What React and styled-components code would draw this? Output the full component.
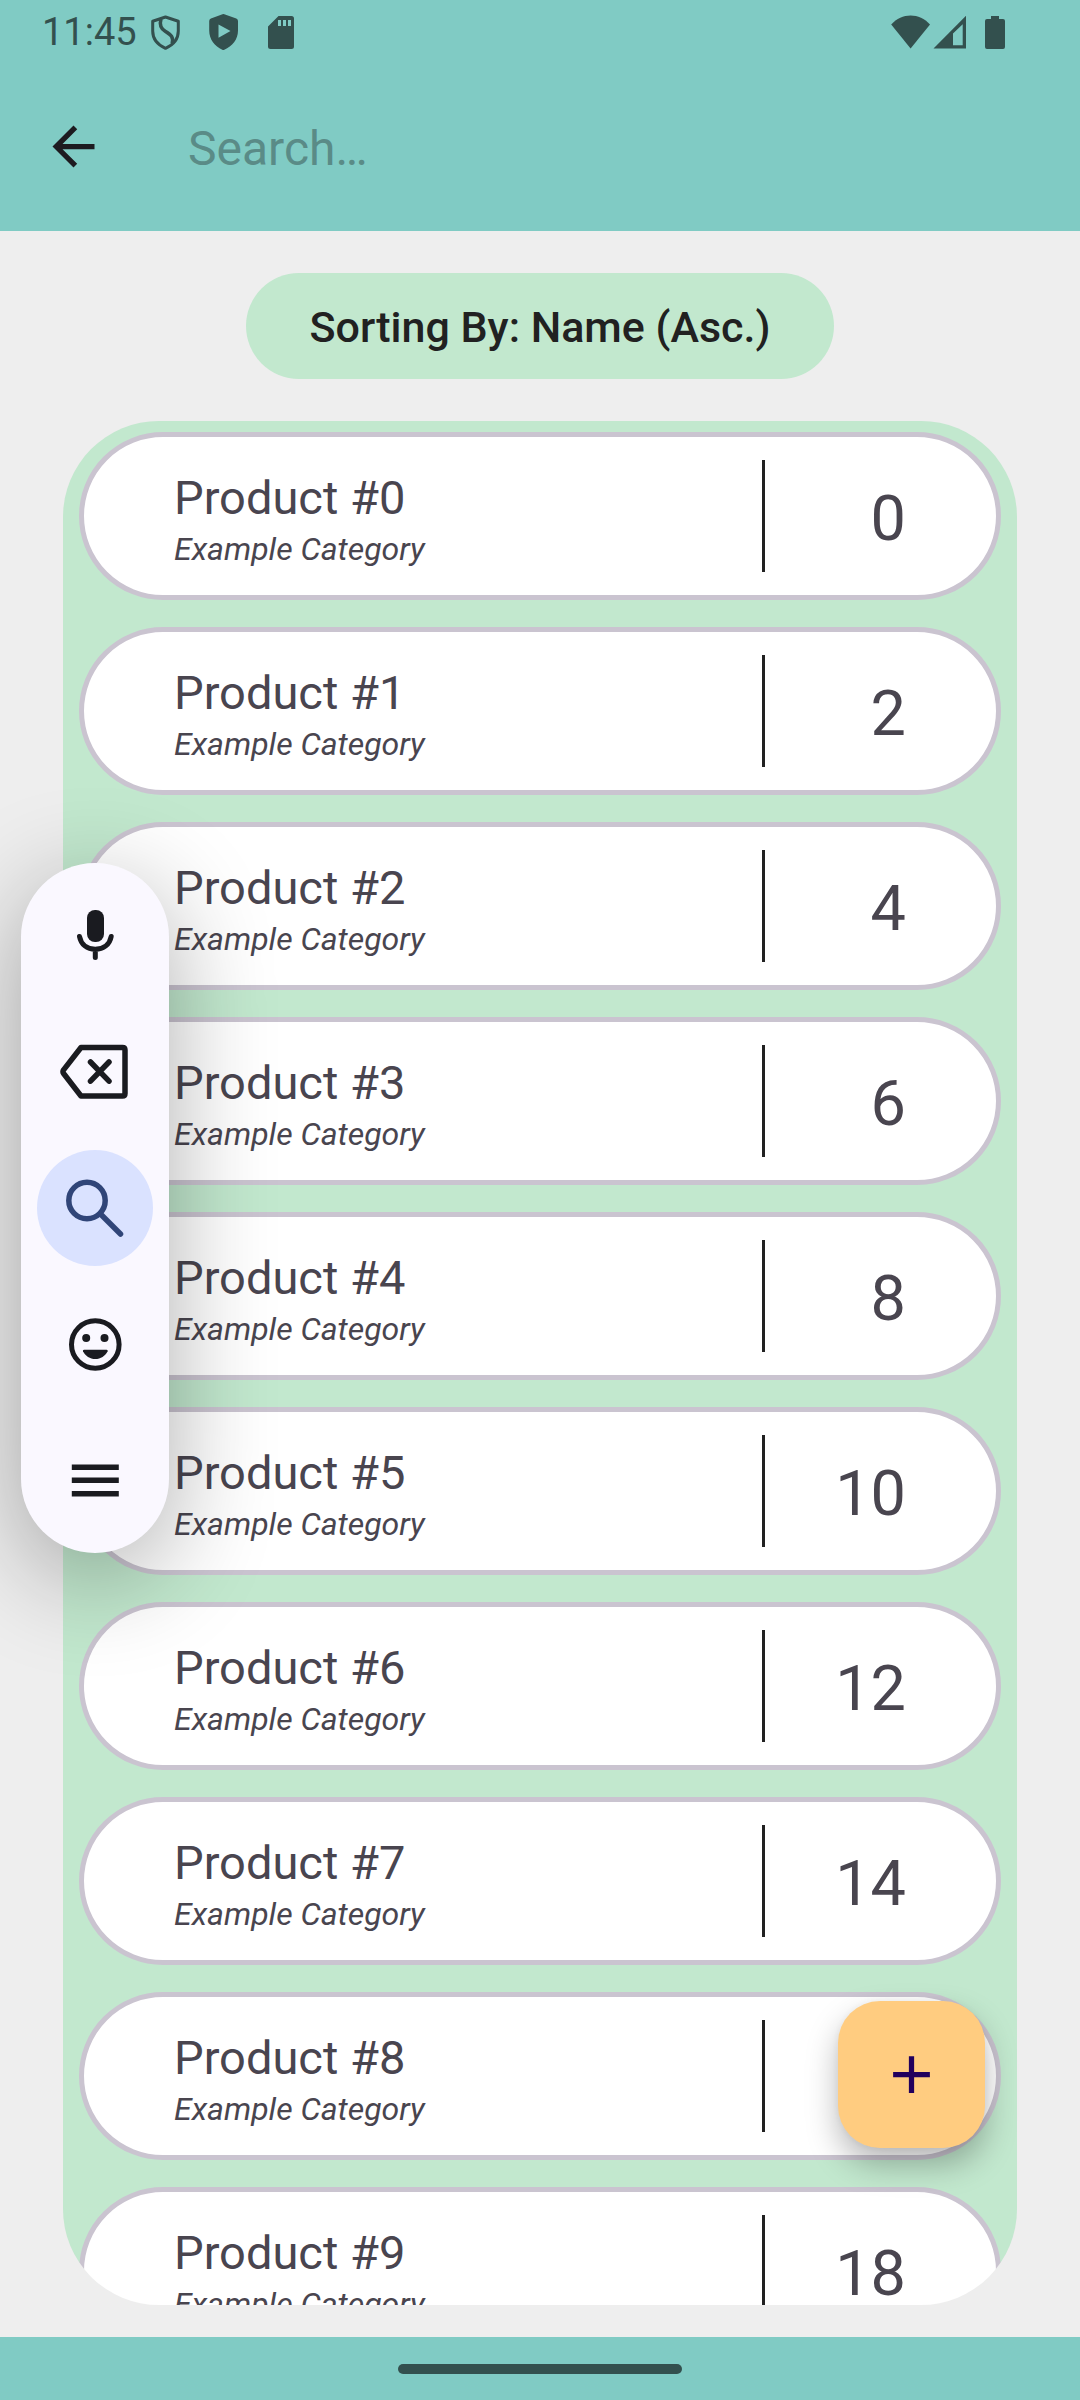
import React, { useState } from "react";
import styled, { createGlobalStyle } from "styled-components";

const GlobalStyle = createGlobalStyle`
  *, *::before, *::after { box-sizing: border-box; }
  body {
    margin: 0;
    background: #eeeeee;
    font-family: Roboto, "Noto Sans", sans-serif;
  }
  button, input { font: inherit; }
`;

const Screen = styled.div`
  position: relative;
  display: flex;
  flex-direction: column;
  height: 100vh;
  overflow: hidden;
  background: #eeeeee;
`;

const TopArea = styled.header`
  background: #80cbc4;
`;

const StatusBar = styled.div`
  display: flex;
  align-items: center;
  justify-content: space-between;
  height: 63px;
  padding: 0 75px 0 42px;
  color: #33504e;
`;

const StatusGroup = styled.div`
  display: flex;
  align-items: center;
  gap: ${(p) => p.$gap}px;
`;

const Clock = styled.time`
  width: 81px;
  font-size: 38px;
  line-height: 44px;
  white-space: nowrap;
`;

const SearchBar = styled.form`
  display: flex;
  align-items: center;
  gap: 62px;
  height: 168px;
  padding: 0 42px 1px 21px;
`;

const IconButton = styled.button`
  display: flex;
  align-items: center;
  justify-content: center;
  width: 105px;
  height: 105px;
  padding: 0;
  border: 0;
  border-radius: 50%;
  background: none;
  color: #1d1b20;
`;

const SearchInput = styled.input`
  flex: 1;
  min-width: 0;
  height: 105px;
  padding: 4px 0 0;
  border: 0;
  outline: 0;
  background: none;
  color: #1d1b20;
  font-size: 48px;

  &::placeholder {
    color: #5a8b87;
    opacity: 1;
  }
`;

const Content = styled.main`
  display: flex;
  flex: 1;
  flex-direction: column;
  align-items: center;
  gap: 42px;
  min-height: 0;
  padding: 42px 63px 32px;
`;

const SortChip = styled.button`
  flex: none;
  height: 106px;
  padding: 2px 63px 0;
  border: 0;
  border-radius: 53px;
  background: #c2e8ce;
  color: #212121;
  font-size: 43px;
  font-weight: 500;
  white-space: nowrap;
`;

const ProductList = styled.ul`
  display: flex;
  flex: 1;
  flex-direction: column;
  gap: 27px;
  width: 100%;
  min-height: 0;
  margin: 0;
  padding: 11px 16px;
  overflow-y: auto;
  scrollbar-width: none;
  border-radius: 96px;
  background: #c2e8ce;
  list-style: none;
`;

const ProductCard = styled.li`
  display: flex;
  flex: none;
  align-items: center;
  height: 168px;
  padding: 0 90px;
  border: 5px solid #cac4d0;
  border-radius: 84px;
  background: #ffffff;
  color: #49454f;
`;

const ProductText = styled.div`
  flex: 1;
  min-width: 0;
  padding-top: 8px;
`;

const ProductName = styled.div`
  font-size: 47px;
  line-height: 58px;
`;

const ProductCategory = styled.div`
  font-size: 32px;
  font-style: italic;
  line-height: 44px;
`;

const Quantity = styled.div`
  display: flex;
  align-items: center;
  justify-content: flex-end;
  width: 144px;
  height: 112px;
  padding-top: 6px;
  border-left: 3px solid #212121;
  font-size: 63px;
  line-height: 74px;
`;

const AddButton = styled.button`
  position: absolute;
  right: 95px;
  bottom: 252px;
  display: flex;
  align-items: center;
  justify-content: center;
  width: 147px;
  height: 147px;
  padding: 0;
  border: 0;
  border-radius: 42px;
  background: #ffcc80;
  color: #22005d;
  box-shadow: 0 16px 32px rgba(0, 0, 0, 0.28), 0 0 8px rgba(0, 0, 0, 0.06);
`;

const InputToolbar = styled.div`
  position: absolute;
  top: 863px;
  left: 21px;
  display: flex;
  flex-direction: column;
  align-items: center;
  justify-content: space-between;
  width: 148px;
  height: 690px;
  padding: 14px 0;
  border-radius: 74px;
  background: #faf8ff;
  box-shadow: 0 24px 104px rgba(0, 0, 0, 0.32);
`;

const ToolButton = styled.button`
  display: flex;
  align-items: center;
  justify-content: center;
  width: 116px;
  height: 116px;
  padding: 0;
  border: 0;
  border-radius: 50%;
  background: ${(p) => (p.$active ? "#dae2ff" : "transparent")};
  color: ${(p) => (p.$active ? "#304578" : "#1a1b20")};
`;

const NavigationBar = styled.footer`
  display: flex;
  flex: none;
  align-items: center;
  justify-content: center;
  height: 63px;
  background: #80cbc4;
`;

const HomeHandle = styled.div`
  width: 284px;
  height: 10px;
  border-radius: 5px;
  background: #33504e;
`;

const ShieldOutlineIcon = () => (
  <svg width="30" height="38" viewBox="0 0 30 38" fill="none" stroke="currentColor" strokeWidth="3" strokeLinejoin="round" aria-hidden="true">
    <path d="M14.500 4 27.300 8.200v9.800c0 8-5.300 14-12.800 17.300C7 32 1.700 26 1.700 18V8.200Z" />
    <path d="M10 6c-1.800 6-.3 9.500 4.200 12.300 6.500 4 8.300 6 7 12" strokeWidth="3.500" />
  </svg>
);

const ShieldPlayIcon = () => (
  <svg width="30" height="38" viewBox="0 0 30 38" fill="currentColor" fillRule="evenodd" aria-hidden="true">
    <path d="M13.500 1.200 1.900 5.600Q.2 6.200.2 8v9.500c0 9 5.600 16 13.100 19.200q1 .4 2 0C23.200 33.500 29 26.500 29 17.500V8q0-1.800-1.700-2.400L15.300 1.200q-.9-.4-1.800 0ZM9.500 11.500 21.500 18 9.500 24.700Z" />
  </svg>
);

const SdCardIcon = () => (
  <svg width="28" height="38" viewBox="0 0 28 38" fill="currentColor" fillRule="evenodd" aria-hidden="true">
    <path d="M11.500 3H24.500Q27 3 27 5.500v28Q27 36 24.500 36H3.500Q1 36 1 33.500V13.500ZM11 7v6h3V7ZM16 7v6h3V7ZM21 7v6h3V7Z" />
  </svg>
);

const WifiIcon = () => (
  <svg width="40" height="34" viewBox="0 0 40 34" fill="currentColor" aria-hidden="true">
    <path d="M.2 9.500C5.500 3.500 12.500.5 19.600.5S33.700 3.500 39 9.500L19.600 33.500Z" />
  </svg>
);

const SignalIcon = () => (
  <svg width="34" height="34" viewBox="0 0 34 34" fill="currentColor" fillRule="evenodd" aria-hidden="true">
    <path d="M.5 33.500 33 .8v32.700ZM20 18.500V30.200H29.700V9.300Z" />
  </svg>
);

const BatteryIcon = () => (
  <svg width="20" height="34" viewBox="0 0 20 34" fill="currentColor" aria-hidden="true">
    <path d="M6 1h8v3h4q2 0 2 2v26q0 2-2 2H2q-2 0-2-2V6q0-2 2-2h4Z" />
  </svg>
);

const BackIcon = () => (
  <svg width="63" height="63" viewBox="0 0 24 24" fill="currentColor" aria-hidden="true">
    <path d="M20 11H7.830l5.590-5.590L12 4l-8 8 8 8 1.410-1.410L7.830 13H20v-2z" />
  </svg>
);

const PlusIcon = () => (
  <svg width="63" height="63" viewBox="0 0 24 24" fill="currentColor" aria-hidden="true">
    <path d="M19 13h-6v6h-2v-6H5v-2h6V5h2v6h6v2z" />
  </svg>
);

const MicIcon = () => (
  <svg width="40" height="52" viewBox="0 0 40 52" fill="none" stroke="currentColor" strokeWidth="5" strokeLinecap="round" aria-hidden="true">
    <rect x="12" y="1" width="17" height="32" rx="8" fill="currentColor" stroke="none" />
    <path d="M4.500 27.500C6 35.500 12 40.200 20.300 40.200S34.700 35.500 36.200 27.500M20.300 40.500v8" />
  </svg>
);

const BackspaceIcon = () => (
  <svg width="70" height="56" viewBox="0 0 70 56" fill="none" stroke="currentColor" strokeWidth="5.500" strokeLinecap="round" strokeLinejoin="round" aria-hidden="true">
    <path d="M21 3.500H62.500Q65 3.500 65 6v43.500q0 2.500-2.500 2.500H21L3.600 29.500q-1.200-1.800 0-3.600Z" />
    <path d="M30.500 18 49 37.200M49 18 30.500 37.200" />
  </svg>
);

const SearchIcon = () => (
  <svg width="60" height="60" viewBox="0 0 60 60" fill="none" stroke="currentColor" strokeWidth="5.500" strokeLinecap="round" aria-hidden="true">
    <circle cx="22" cy="22.500" r="18.200" />
    <path d="M36 36.500 55.500 56" />
  </svg>
);

const SmileyIcon = () => (
  <svg width="54" height="54" viewBox="0 0 54 54" fill="currentColor" aria-hidden="true">
    <circle cx="27.300" cy="26.500" r="23.800" fill="none" stroke="currentColor" strokeWidth="5" />
    <circle cx="18.200" cy="20" r="4" />
    <circle cx="36.500" cy="20" r="4" />
    <path d="M16 31.700h22.600q1.600 0 1 1.500C37.200 38.100 32.700 41 27.300 41S17.400 38.100 15 33.200q-.6-1.500 1-1.500Z" />
  </svg>
);

const MenuIcon = () => (
  <svg width="48" height="34" viewBox="0 0 48 34" fill="currentColor" aria-hidden="true">
    <path d="M.8.500h47v5.500H.8ZM.8 13.500h47v5.500H.8ZM.8 27h47v5.500H.8Z" />
  </svg>
);

const TOOLS = [
  { label: "Voice input", Icon: MicIcon },
  { label: "Delete", Icon: BackspaceIcon },
  { label: "Search", Icon: SearchIcon, active: true },
  { label: "Emoji", Icon: SmileyIcon },
  { label: "Menu", Icon: MenuIcon },
];

const PRODUCTS = Array.from({ length: 10 }, (_, i) => ({
  name: `Product #${i}`,
  category: "Example Category",
  quantity: i * 2,
}));

export default function App() {
  const [query, setQuery] = useState("");
  const visible = PRODUCTS.filter((p) =>
    p.name.toLowerCase().includes(query.toLowerCase())
  );

  return (
    <>
      <GlobalStyle />
      <Screen>
        <TopArea>
          <StatusBar>
            <StatusGroup $gap={28}>
              <Clock>11:45</Clock>
              <ShieldOutlineIcon />
              <ShieldPlayIcon />
              <SdCardIcon />
            </StatusGroup>
            <StatusGroup $gap={2}>
              <WifiIcon />
              <StatusGroup $gap={18}>
                <SignalIcon />
                <BatteryIcon />
              </StatusGroup>
            </StatusGroup>
          </StatusBar>
          <SearchBar role="search" onSubmit={(e) => e.preventDefault()}>
            <IconButton type="button" aria-label="Back">
              <BackIcon />
            </IconButton>
            <SearchInput
              type="text"
              aria-label="Search products"
              placeholder="Search…"
              value={query}
              onChange={(e) => setQuery(e.target.value)}
            />
          </SearchBar>
        </TopArea>

        <Content>
          <SortChip type="button">Sorting By: Name (Asc.)</SortChip>
          <ProductList>
            {visible.map((p) => (
              <ProductCard key={p.name}>
                <ProductText>
                  <ProductName>{p.name}</ProductName>
                  <ProductCategory>{p.category}</ProductCategory>
                </ProductText>
                <Quantity>{p.quantity}</Quantity>
              </ProductCard>
            ))}
          </ProductList>
        </Content>

        <NavigationBar>
          <HomeHandle />
        </NavigationBar>

        <AddButton type="button" aria-label="Add product">
          <PlusIcon />
        </AddButton>

        <InputToolbar role="toolbar" aria-label="Input tools">
          {TOOLS.map(({ label, Icon, active }) => (
            <ToolButton key={label} type="button" aria-label={label} $active={active}>
              <Icon />
            </ToolButton>
          ))}
        </InputToolbar>
      </Screen>
    </>
  );
}
